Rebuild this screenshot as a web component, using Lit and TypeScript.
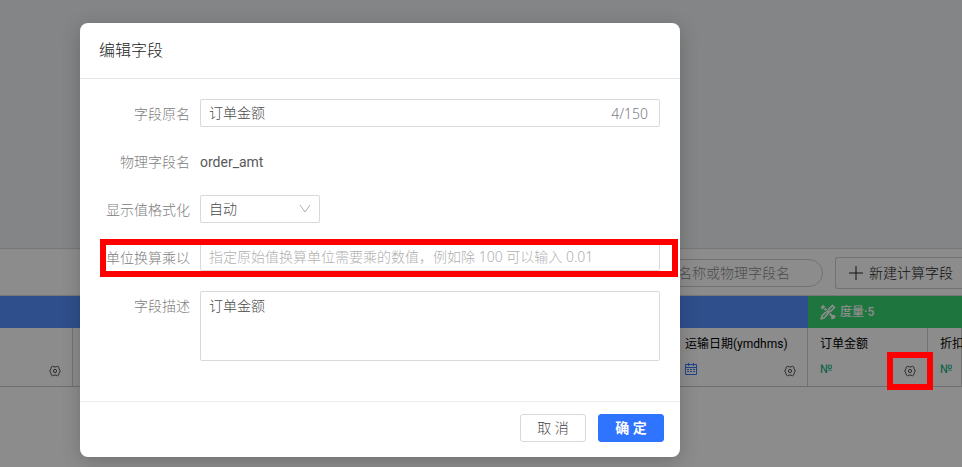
import { LitElement, html, css, svg } from "lit";
import { customElement, property } from "lit/decorators.js";

const gear = svg`
  <svg class="gear" viewBox="0 0 12 12" width="12" height="12" fill="none" stroke="currentColor" aria-hidden="true">
    <path d="M3.500 1.200L5 1.900h2l1.500-.7 1.300.9.200 1.600L11.300 6 10 8.300l-.2 1.600-1.300.9L7 10.100H5l-1.500.7-1.300-.9L2 8.300.7 6 2 3.700l.2-1.600z" stroke-linejoin="round"/>
    <circle cx="6" cy="6" r="1.600"/>
  </svg>`;

const calendar = svg`
  <svg viewBox="0 0 12 12" width="12" height="12" fill="none" stroke="currentColor" aria-hidden="true">
    <path d="M.5 1.500h11v10H.5zM.5 4.500h11M3.500 0v3M8.500 0v3"/>
    <path d="M2 6.500h8M2 8.500h8" stroke-dasharray="2 1"/>
  </svg>`;

const measure = svg`
  <svg viewBox="0 0 16 16" width="16" height="16" aria-hidden="true">
    <path d="M3.200.8l2 2-2.600 2.600-2-2zM3.900 5.300l1.500-1.500 7.200 7.200 2.900.3-.3 2.100-1.700 1.700-2.200.2-.2-2.800z" fill="currentColor"/>
    <path d="M12.500 1.500l2 2L4 14l-2.700.7L2 12z" fill="none" stroke="currentColor" stroke-width="1.600"/>
    <path d="M5.700 10.900L10.900 5.700" stroke="currentColor" stroke-width="1"/>
    <path d="M5 8l3-3M8 11l3-3" stroke="#3ad672" stroke-width="1"/>
  </svg>`;

@customElement("field-cell")
export class FieldCell extends LitElement {
  @property() name = "";
  @property() kind = "";
  @property({ type: Boolean }) settings = false;
  @property({ type: Boolean }) marked = false;

  static styles = css`
    :host {
      display: flex;
      flex-direction: column;
      justify-content: space-between;
      box-sizing: border-box;
      height: 58px;
      padding: 7px 12px 8px;
      white-space: nowrap;
      font-size: 12px;
      line-height: 18px;
      color: #000;
    }
    .name { min-height: 18px; font-weight: 400; }
    .foot {
      display: flex;
      align-items: flex-start;
      height: 16px;
    }
    .date { display: flex; padding-top: 1px; color: #3a7bff; }
    .number {
      padding-top: 1px;
      font-weight: 400;
      line-height: 12px;
      color: #00b578;
    }
    .settings {
      position: relative;
      display: flex;
      margin: 0 0 0 auto;
      padding: 3px 0 0;
      border: 0;
      background: none;
      color: #555;
    }
    .mark {
      position: absolute;
      z-index: 3;
      inset: -10px -17px -13px;
      border: 6px solid #f00;
    }
  `;

  render() {
    return html`
      <span class="name">${this.name}</span>
      <div class="foot">
        ${this.kind === "date" ? html`<span class="date">${calendar}</span>` : ""}
        ${this.kind === "number" ? html`<span class="number">№</span>` : ""}
        ${this.settings
          ? html`<button class="settings" aria-label="设置">
              ${gear}${this.marked ? html`<span class="mark"></span>` : ""}
            </button>`
          : ""}
      </div>
    `;
  }
}

@customElement("edit-dialog")
export class EditDialog extends LitElement {
  static styles = css`
    :host {
      display: flex;
      flex-direction: column;
      width: 600px;
      border-radius: 8px;
      background: #fff;
      box-shadow: 0 4px 20px rgba(0, 0, 0, 0.2);
      color: #4a4a4a;
      font-size: 14px;
    }
    h1 {
      margin: 0;
      padding: 16px 19px 15px;
      border-bottom: 1px solid #e4e4e4;
      font-size: 16px;
      font-weight: inherit;
      line-height: 24px;
      color: #1a1a1a;
    }
    .body {
      display: flex;
      flex-direction: column;
      gap: 20px;
      padding: 20px 20px 40px 0;
    }
    .row {
      position: relative;
      display: grid;
      grid-template-columns: 110px 1fr;
      column-gap: 10px;
      line-height: 28px;
    }
    .label, .value { height: 28px; line-height: 30px; }
    .label { text-align: right; color: #808080; }
    .value { font-weight: 400; color: #595959; }
    .box {
      display: flex;
      box-sizing: border-box;
      height: 28px;
      padding: 0 11px 0 8px;
      border: 1px solid #d9d9d9;
      border-radius: 2px;
      line-height: 28px;
    }
    input, textarea, select {
      box-sizing: border-box;
      margin: 0;
      padding: 0;
      border: 0;
      outline: 0;
      background: none;
      font: inherit;
      color: inherit;
    }
    input { flex: 1; min-width: 0; line-height: 28px; }
    ::placeholder { color: #b0b0b0; opacity: 1; }
    .latin { font-family: "Noto Sans", "Noto Sans CJK SC", sans-serif; font-weight: 300; }
    .count { color: #7a7a88; }
    .pick { align-items: center; width: 120px; padding-right: 8px; }
    select { flex: 1; min-width: 0; appearance: none; }
    .arrow { margin-left: 4px; color: #b0b0b0; }
    textarea {
      display: block;
      width: 100%;
      height: 70px;
      padding: 4px 8px;
      border: 1px solid #d9d9d9;
      border-radius: 2px;
      line-height: 20px;
      resize: none;
    }
    .mark {
      position: absolute;
      inset: -4px -18px -6px 20px;
      border: 6px solid #f00;
      pointer-events: none;
    }
    .foot {
      display: flex;
      justify-content: flex-end;
      gap: 12px;
      padding: 12px 16px 15px;
      border-top: 1px solid #ededed;
    }
    .btn {
      width: 66px;
      height: 28px;
      padding: 0;
      border: 1px solid #d9d9d9;
      border-radius: 3px;
      background: #fff;
      font: inherit;
      line-height: 24px;
      color: #4a4a4a;
    }
    .primary {
      border-color: #2e74ff;
      background: #2e74ff;
      font-weight: 700;
      color: #fff;
    }
  `;

  render() {
    return html`
      <h1>编辑字段</h1>
      <div class="body">
        <div class="row">
          <label class="label" for="name">字段原名</label>
          <div class="box">
            <input id="name" .value=${"订单金额"} />
            <span class="count latin">4/150</span>
          </div>
        </div>
        <div class="row">
          <span class="label">物理字段名</span>
          <span class="value">order_amt</span>
        </div>
        <div class="row">
          <label class="label" for="format">显示值格式化</label>
          <div class="box pick">
            <select id="format"><option>自动</option></select>
            <svg class="arrow" viewBox="0 0 12 10" width="12" height="10" fill="none" stroke="currentColor" aria-hidden="true">
              <path d="M1 1l5 7 5-7" />
            </svg>
          </div>
        </div>
        <div class="row">
          <label class="label" for="unit">单位换算乘以</label>
          <div class="box">
            <input id="unit" class="latin" placeholder="指定原始值换算单位需要乘的数值，例如除 100 可以输入 0.01" />
          </div>
          <span class="mark"></span>
        </div>
        <div class="row">
          <label class="label" for="desc">字段描述</label>
          <textarea id="desc" .value=${"订单金额"}></textarea>
        </div>
      </div>
      <div class="foot">
        <button class="btn">取 消</button>
        <button class="btn primary">确 定</button>
      </div>
    `;
  }
}

@customElement("app-root")
export class AppRoot extends LitElement {
  static styles = css`
    :host {
      position: relative;
      display: flex;
      flex-direction: column;
      min-height: 100vh;
      overflow: hidden;
      background: #fff;
      font-family: Roboto, "Noto Sans CJK SC", sans-serif;
      font-weight: 300;
    }
    .canvas {
      height: 248px;
      background: #f0f2f5;
      border-bottom: 1px solid #d9d9d9;
    }
    .toolbar {
      display: flex;
      justify-content: flex-end;
      align-items: center;
      gap: 12px;
      padding: 8px 0 6px;
      border-bottom: 1px solid #d9d9d9;
    }
    .search {
      box-sizing: border-box;
      width: 220px;
      height: 28px;
      padding: 0 18px;
      border: 1px solid #d0d0d0;
      border-radius: 14px;
      background: #fff;
      font: inherit;
      font-size: 14px;
    }
    .search::placeholder { color: #8c8c8c; opacity: 1; }
    .create {
      display: flex;
      align-items: center;
      gap: 6px;
      height: 32px;
      padding: 0 9px 0 13px;
      border: 1px solid #d0d0d0;
      border-right: 0;
      border-radius: 3px 0 0 3px;
      background: #fff;
      font: inherit;
      font-size: 14px;
      line-height: 20px;
      color: #222;
    }
    .fields {
      width: 100%;
      border-collapse: collapse;
      table-layout: fixed;
    }
    .c-first { width: 73px; }
    .c { width: 120px; }
    .c-date { width: 135px; }
    th {
      height: 32px;
      padding: 0 12px;
      background: #5790ff;
      color: #fff;
      font-size: 12px;
      font-weight: 500;
      line-height: 18px;
    }
    .measures { background: #3ad672; }
    .group { display: flex; align-items: center; gap: 4px; white-space: nowrap; }
    td {
      padding: 0;
      box-shadow: inset -1px 0 #d0d0d0, 0 1px #c8c8c8;
    }
    .mask {
      position: absolute;
      z-index: 2;
      inset: 0;
      display: flex;
      align-items: flex-start;
      padding: 23px 80px 10px;
      background: rgba(0, 0, 0, 0.45);
    }
  `;

  render() {
    return html`
      <div class="canvas"></div>
      <div class="toolbar">
        <input class="search" aria-label="搜索" placeholder="搜索字段名称或物理字段名" />
        <button class="create">
          <svg viewBox="0 0 14 14" width="14" height="14" stroke="currentColor" aria-hidden="true">
            <path d="M7 0v14M0 7h14" />
          </svg>
          新建计算字段
        </button>
      </div>
      <table class="fields">
        <colgroup>
          <col class="c-first" />
          <col class="c" span="5" />
          <col class="c-date" />
          <col class="c" />
          <col />
        </colgroup>
        <thead>
          <tr>
            <th colspan="7"></th>
            <th class="measures" colspan="2">
              <span class="group">${measure}度量·5</span>
            </th>
          </tr>
        </thead>
        <tbody>
          <tr>
            <td><field-cell settings></field-cell></td>
            <td></td><td></td><td></td><td></td><td></td>
            <td><field-cell name="运输日期(ymdhms)" kind="date" settings></field-cell></td>
            <td><field-cell name="订单金额" kind="number" settings marked></field-cell></td>
            <td><field-cell name="折扣" kind="number"></field-cell></td>
          </tr>
        </tbody>
      </table>
      <div class="mask"><edit-dialog role="dialog" aria-modal="true"></edit-dialog></div>
    `;
  }
}
